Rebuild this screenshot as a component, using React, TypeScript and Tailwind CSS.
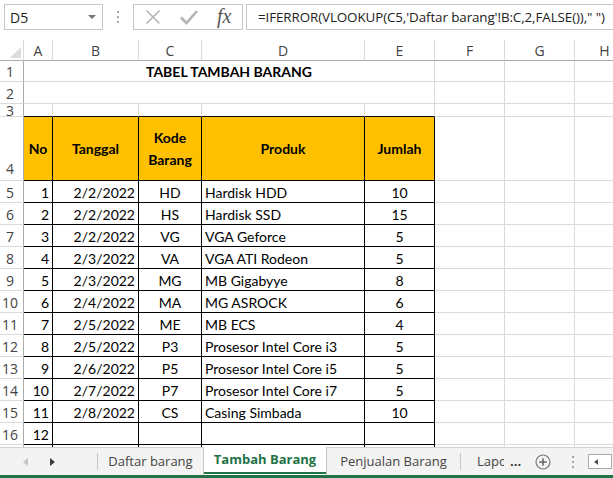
import React from 'react';

const cellFont = { fontFamily: 'Lato, "Liberation Sans", sans-serif' };
const uiFont = { fontFamily: '"Open Sans", "Noto Sans", sans-serif' };

// A..H column widths
const COL_W = ['w-[29px]', 'w-[86px]', 'w-[63px]', 'w-[163px]', 'w-[70px]', 'w-[70px]', 'w-[70px]', 'w-[60px]'];
const LETTERS = ['A', 'B', 'C', 'D', 'E', 'F', 'G', 'H'];

const DATA: [string, string, string, string, string][] = [
  ['1', '2/2/2022', 'HD', 'Hardisk HDD', '10'],
  ['2', '2/2/2022', 'HS', 'Hardisk SSD', '15'],
  ['3', '2/2/2022', 'VG', 'VGA Geforce', '5'],
  ['4', '2/3/2022', 'VA', 'VGA ATI Rodeon', '5'],
  ['5', '2/3/2022', 'MG', 'MB Gigabyye', '8'],
  ['6', '2/4/2022', 'MA', 'MG ASROCK', '6'],
  ['7', '2/5/2022', 'ME', 'MB ECS', '4'],
  ['8', '2/5/2022', 'P3', 'Prosesor Intel Core i3', '5'],
  ['9', '2/6/2022', 'P5', 'Prosesor Intel Core i5', '5'],
  ['10', '2/7/2022', 'P7', 'Prosesor Intel Core i7', '5'],
  ['11', '2/8/2022', 'CS', 'Casing Simbada', '10'],
  ['12', '', '', '', ''],
];

const ALIGN = ['justify-end pr-[3px]', 'justify-end pr-[3px]', 'justify-center', 'justify-start pl-[3px]', 'justify-center'];

function RowHead({ n, h }: { n: string; h: string }) {
  return (
    <div
      className={`${h} w-[24px] shrink-0 box-border border-r border-b border-r-[#ababab] border-b-[#dadada] flex items-center justify-center pr-[3px] pt-[1px] overflow-hidden text-[14px] text-[#444]`}
      style={uiFont}
    >
      {n}
    </div>
  );
}

function GridCells({ from, h }: { from: number; h: string }) {
  return (
    <>
      {COL_W.slice(from).map((w, i) => (
        <div key={i} className={`${h} ${w} shrink-0 box-border border-r border-b border-[#dadada]`} />
      ))}
    </>
  );
}

function FormulaBar() {
  return (
    <div className="h-[40px] flex items-start pt-[4px] bg-white" style={uiFont}>
      <div className="ml-[4px] w-[99px] h-[26px] box-border border border-[#c6c6c6] flex items-center justify-between pl-[5px] pr-[6px] text-[14px] text-[#222]">
        <span>D5</span>
        <svg width="8" height="5" viewBox="0 0 8 5">
          <path d="M0 0 L8 0 L4 4 Z" fill="#777" />
        </svg>
      </div>
      <div className="w-[30px] h-[26px] flex flex-col items-center justify-center gap-[3px]">
        <span className="w-[2px] h-[2px] bg-[#a6a6a6]" />
        <span className="w-[2px] h-[2px] bg-[#a6a6a6]" />
        <span className="w-[2px] h-[2px] bg-[#a6a6a6]" />
      </div>
      <div className="w-[110px] h-[26px] box-border border border-[#c6c6c6] flex items-center pl-[11px] gap-[19px]">
        <svg width="16" height="16" viewBox="0 0 16 16">
          <path d="M1.5 1.5 L14.5 14.5 M14.5 1.5 L1.5 14.5" stroke="#b4b4b4" strokeWidth="1.6" />
        </svg>
        <svg width="18" height="16" viewBox="0 0 18 16">
          <path d="M1 8.5 L6.5 14 L17 2" stroke="#b4b4b4" strokeWidth="2.6" fill="none" />
        </svg>
        <span
          className="text-[20px] italic leading-none text-[#555] -mt-[3px]"
          style={{ fontFamily: '"Liberation Serif", serif' }}
        >
          fx
        </span>
      </div>
      <div className="ml-[3px] flex-1 h-[26px] box-border border-l border-t border-b border-[#c6c6c6] flex items-center pl-[11px] text-[13.4px] tracking-[-0.1px] text-[#222] whitespace-nowrap overflow-hidden">
        =IFERROR(VLOOKUP(C5,'Daftar barang'!B:C,2,FALSE()),&quot; &quot;)
      </div>
    </div>
  );
}

function ColumnHeader() {
  return (
    <div className="flex h-[21px]" style={uiFont}>
      <div className="w-[24px] h-[21px] shrink-0 box-border border-r border-b border-r-[#dadada] border-b-[#ababab] flex items-end justify-end pr-[2px] pb-[2px]">
        <svg width="11" height="11" viewBox="0 0 11 11">
          <path d="M11 0 L11 11 L0 11 Z" fill="#dcdcdc" />
        </svg>
      </div>
      {COL_W.map((w, i) => (
        <div
          key={i}
          className={`${w} h-[21px] shrink-0 box-border border-r border-b border-r-[#dadada] border-b-[#ababab] flex items-center justify-center text-[14px] text-[#444]`}
        >
          {LETTERS[i]}
        </div>
      ))}
    </div>
  );
}

function TabBar() {
  return (
    <div className="flex flex-col" style={uiFont}>
      <div className="h-[28px] flex items-stretch bg-[#f3f3f3] border-t border-[#d4d4d4] text-[13px] text-[#444] whitespace-nowrap">
        <div className="w-[97px] flex items-center pl-[23px] gap-[22px]">
          <svg width="5" height="8" viewBox="0 0 5 8">
            <path d="M5 0 L5 8 L0 4 Z" fill="#c4c4c4" />
          </svg>
          <svg width="5" height="8" viewBox="0 0 5 8">
            <path d="M0 0 L0 8 L5 4 Z" fill="#3d3d3d" />
          </svg>
        </div>
        <div className="w-[106px] flex items-center justify-center border-l border-[#c6c6c6] my-[5px]">
          Daftar barang
        </div>
        <div className="w-[124px] flex flex-col bg-white border-l border-r border-[#c6c6c6] -mt-[1px]">
          <div className="flex-1 flex items-center justify-center pt-[1px] font-bold text-[#217346]">
            Tambah Barang
          </div>
          <div className="h-[2px] bg-[#217346] mb-[1px]" />
        </div>
        <div className="w-[133px] flex items-center justify-center">Penjualan Barang</div>
        <div className="w-[50px] flex items-center border-l border-[#c6c6c6] my-[5px] pl-[16px]">
          <span className="block w-[27px] overflow-hidden">Lapo</span>
        </div>
        <div className="w-[18px] flex items-center font-bold text-[#333]">...</div>
        <div className="w-[30px] flex items-center justify-center">
          <svg width="16" height="16" viewBox="0 0 16 16">
            <circle cx="8" cy="8" r="7" stroke="#777" strokeWidth="1.2" fill="none" />
            <path d="M8 4.2 V11.8 M4.2 8 H11.8" stroke="#666" strokeWidth="1.5" />
          </svg>
        </div>
        <div className="w-[30px] flex flex-col items-center justify-center gap-[3px]">
          <span className="w-[2px] h-[2px] bg-[#a6a6a6]" />
          <span className="w-[2px] h-[2px] bg-[#a6a6a6]" />
          <span className="w-[2px] h-[2px] bg-[#a6a6a6]" />
        </div>
        <div className="flex-1 flex items-center">
          <div className="w-[24px] h-[15px] box-border border border-[#ababab] bg-white flex items-center pl-[5px]">
            <svg width="4" height="6" viewBox="0 0 4 6">
              <path d="M4 0 L4 6 L0 3 Z" fill="#555" />
            </svg>
          </div>
        </div>
      </div>
      <div className="h-[3px] bg-[#217346]" />
    </div>
  );
}

export default function App() {
  const headers = ['No', 'Tanggal', '', 'Produk', 'Jumlah'];
  return (
    <div className="w-[613px] h-[478px] overflow-hidden bg-white flex flex-col">
      <FormulaBar />
      <ColumnHeader />
      <div className="flex flex-col text-[14px] text-black" style={cellFont}>
        {/* row 1: merged title */}
        <div className="flex">
          <RowHead n="1" h="h-[21px]" />
          <div className="w-[411px] h-[21px] shrink-0 box-border border-r border-b border-[#dadada] flex items-center justify-center font-bold">
            TABEL TAMBAH BARANG
          </div>
          <GridCells from={5} h="h-[21px]" />
        </div>
        {/* row 2 */}
        <div className="flex">
          <RowHead n="2" h="h-[22px]" />
          <div className="w-[411px] h-[22px] shrink-0 box-border border-r border-b border-[#dadada]" />
          <GridCells from={5} h="h-[22px]" />
        </div>
        {/* row 3 */}
        <div className="flex">
          <div className="h-[13px] w-[24px] shrink-0 box-border border-r border-b border-r-[#ababab] border-b-[#dadada] overflow-hidden flex justify-center pr-[3px] text-[14px] text-[#444] leading-[14px]" style={uiFont}>
            3
          </div>
          {COL_W.slice(0, 5).map((w, i) => (
            <div key={i} className={`h-[13px] ${w} shrink-0 box-border border-r border-b border-r-[#dadada] border-b-black`} />
          ))}
          <GridCells from={5} h="h-[13px]" />
        </div>
        {/* row 4: table header */}
        <div className="flex">
          <div className="h-[64px] w-[24px] shrink-0 box-border border-r border-b border-r-[#ababab] border-b-[#dadada] flex items-end justify-center pr-[3px] pb-[1px] text-[14px] text-[#444]" style={uiFont}>
            4
          </div>
          {headers.map((t, i) => (
            <div
              key={i}
              className={`h-[64px] ${COL_W[i]} shrink-0 box-border border-r border-b border-black bg-[#ffc000] flex flex-col items-center justify-center font-bold leading-[22px]`}
            >
              {i === 2 ? (
                <>
                  <span>Kode</span>
                  <span>Barang</span>
                </>
              ) : (
                t
              )}
            </div>
          ))}
          <GridCells from={5} h="h-[64px]" />
        </div>
        {DATA.map((row, r) => (
          <div key={r} className="flex">
            <RowHead n={String(r + 5)} h="h-[22px]" />
            {row.map((v, i) => (
              <div
                key={i}
                className={`h-[22px] ${COL_W[i]} shrink-0 box-border border-r border-b border-black flex items-center pt-[1px] whitespace-nowrap ${ALIGN[i]}`}
              >
                {v}
              </div>
            ))}
            <GridCells from={5} h="h-[22px]" />
          </div>
        ))}
        {/* row 17 partial */}
        <div className="flex h-[2px] overflow-hidden">
          <div className="w-[24px] h-[2px] shrink-0 border-r border-[#ababab]" />
          {COL_W.map((w, i) => (
            <div key={i} className={`${w} h-[2px] shrink-0 box-border border-r ${i < 5 ? 'border-black' : 'border-[#dadada]'}`} />
          ))}
        </div>
      </div>
      <TabBar />
    </div>
  );
}
